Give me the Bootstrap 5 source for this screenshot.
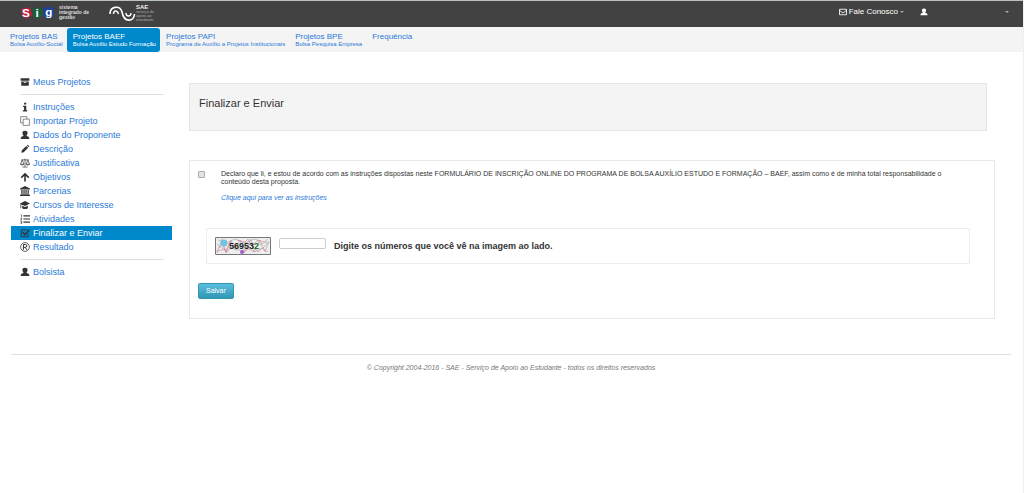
<!DOCTYPE html>
<html lang="pt-BR">
<head>
<meta charset="utf-8">
<meta name="viewport" content="width=device-width, initial-scale=1">
<title>SAE - Finalizar e Enviar</title>
<link rel="stylesheet" href="https://cdn.jsdelivr.net/npm/bootstrap@5.3.0/dist/css/bootstrap.min.css">
<style>
body{font-family:"Liberation Sans",Arial,sans-serif;font-size:8px;line-height:10px;color:#333;background:#fff;border-right:1px solid #f0f0f0;min-height:100vh}
a{color:#2a7ad8;text-decoration:none}
.topbar{background:#424242;border-top:1px solid #b9c2be;height:27px;padding:0 14px 0 21px}
.topbar .btn{--bs-btn-color:#fff;--bs-btn-hover-color:#fff;--bs-btn-active-color:#fff;--bs-btn-font-size:8px;--bs-btn-line-height:10px;--bs-btn-padding-x:0px;--bs-btn-padding-y:0px;--bs-btn-border-width:0px;display:flex;align-items:center}
.topbar .dropdown-toggle::after{border:solid transparent;border-width:2px 2px 0;border-top-color:#aaa;margin-left:2px}
.topbar .btn svg{width:8px;height:8px;margin-right:2px}
.topbar .user-menu{width:89px;justify-content:space-between}
.actions{padding-top:6px}
.brand-copy{font-size:5px;line-height:5px;color:#ddd;font-weight:700}
.brand-copy span{display:block}
.sae{margin-left:20px;color:#fff}
.sae-copy{font-size:4px;line-height:4px;color:#aaa}
.sae-copy b{display:block;font-size:6px;line-height:5px;color:#eee}
.tabs{background:#f4f4f4;height:25px;padding-left:4px}
.tabs .nav-link{padding:4px 4px 0 6px;height:24px;line-height:9px;font-size:8px;color:#2a7ad8;border-radius:3px;margin-top:1px}
.tabs .nav-link.active{background:#0088cc;color:#fff}
.tabs small{display:block;font-size:6px;line-height:6px}
.page{padding:23px 11px 0 11px}
.side{width:161px}
.side .nav-link{display:flex;align-items:center;gap:3px;height:14px;padding:0 0 0 9px;font-size:9px;line-height:14px;color:#2a7ad8}
.side .nav-link.active{background:#0088cc;color:#fff}
.side svg{width:10px;height:10px;color:#333;flex:none}
.side hr,.foot hr{border-color:#e0e0e0;opacity:1}
.side hr{margin:5px 8px 5px 9px}
.main-col{padding:8px 17px 0}
.title-box{background:#f4f4f4;border:1px solid #e6e6e6;height:48px;padding:13px 9px;margin-right:8px}
.title-box h1{font-size:11px;line-height:13px;margin:0;font-weight:400}
.panel{border:1px solid #e8e8e8;margin-top:29px;height:159px;padding:9px 24px 0 8px}
.terms{font-size:7px;line-height:8px;gap:16px;padding-right:16px}
.terms-link{font-size:7px;line-height:8px;margin:8px 0 0 23px;font-style:italic}
.panel .form-check-input{width:7px;height:7px;margin:1px 0 0;border:1px solid #aaa;border-radius:1px;background-color:#e4e4e4;float:none;flex:none}
.captcha{border:1px solid #ececec;height:36px;margin:26px 0 0 8px;padding:0 8px}
.captcha .form-control{width:47px;height:11px;min-height:0;padding:0 2px;margin:9px 8px 0;font-size:8px;border:1px solid #ccc;border-radius:2px;align-self:flex-start}
.captcha label{font-size:9px;font-weight:700}
.btn-save{--bs-btn-color:#fff;--bs-btn-hover-color:#fff;--bs-btn-font-size:7px;--bs-btn-line-height:10px;--bs-btn-padding-x:7px;--bs-btn-padding-y:2px;--bs-btn-border-radius:2px;border:1px solid #2f96b4;background:linear-gradient(#5bc0de,#2f96b4);margin-top:19px}
.foot{padding:35px 12px 0 11px;font-size:7px;color:#777}
.foot hr{margin:0 0 8px}
</style>
</head>
<body>
<header class="topbar d-flex align-items-start">
  <a href="#" class="d-flex align-items-center mt-1 gap-1" aria-label="SIG, sistema integrado de gestão">
    <svg width="34" height="15" viewBox="0 0 35 15" aria-hidden="true"><path fill="#b5203f" d="M0 4l9-2 3 8-7 4-4-3z"/><path fill="#17603b" d="M12 4l7-2 3 3v6l-8 3-2-5z"/><path fill="#1b459c" d="M23 4l5-3 6 3v7l-7 3-4-4z"/><g fill="#fff" font-family="Liberation Sans" font-size="12" font-weight="700"><text x="1" y="12">S</text><text x="15" y="12">i</text><text x="25" y="11">g</text></g></svg>
    <span class="brand-copy"><span>sistema</span><span>integrado de</span><span>gestão</span></span>
  </a>
  <a href="#" class="sae d-flex align-items-center mt-1" aria-label="SAE">
    <svg width="27" height="16" viewBox="0 0 27 16" fill="none" stroke="#fff" aria-hidden="true"><path stroke-width="1.600" d="M1 8C1 0 11-1 13 6c2 11 12 10 12.500 2"/><path stroke-width="1.400" d="M4.500 8c0-4 4-4 5 0M17 7c0 4 5 4 5 0"/></svg>
    <span class="sae-copy"><b>SAE</b>serviço de<br>apoio ao<br>estudante</span>
  </a>
  <div class="actions d-flex ms-auto">
    <button type="button" class="btn dropdown-toggle me-3"><svg viewBox="0 0 16 16" fill="none" stroke="currentColor" stroke-width="1.700" aria-hidden="true"><path d="M1 2.500h14v11H1zM1 5l7 5 7-5"/></svg>Fale Conosco</button>
    <button type="button" class="btn dropdown-toggle user-menu" aria-label="Usuário"><svg viewBox="0 0 16 16" aria-hidden="true"><use href="#i-user"/></svg></button>
  </div>
</header>
<nav class="tabs nav" aria-label="Projetos">
  <a class="nav-link" href="#">Projetos BAS<small>Bolsa Auxílio-Social</small></a>
  <a class="nav-link active" href="#" aria-current="page">Projetos BAEF<small>Bolsa Auxílio Estudo Formação</small></a>
  <a class="nav-link" href="#">Projetos PAPI<small>Programa de Auxílio a Projetos Institucionais</small></a>
  <a class="nav-link" href="#">Projetos BPE<small>Bolsa Pesquisa Empresa</small></a>
  <a class="nav-link" href="#">Frequência</a>
</nav>
<svg class="d-none" aria-hidden="true">
  <symbol id="i-user" viewBox="0 0 16 16"><path fill="currentColor" d="M8 1c3.500 0 4.500 2 4 4.500S10.500 9 10 9.500c3 .7 5 1 5 5H1c0-4 2-4.300 5-5-.5-.5-1.500-1.500-2-4S4.500 1 8 1z"/></symbol>
</svg>
<div class="page d-flex">
  <nav class="side nav flex-column flex-nowrap flex-shrink-0" aria-label="Menu do projeto">
    <a class="nav-link" href="#"><svg viewBox="0 0 16 16"><path fill="currentColor" d="M1 2h14v4H1zM2 7h12v7H2z"/><path stroke="#fff" stroke-width="1.300" d="M6 8.700h4"/></svg>Meus Projetos</a>
    <hr>
    <a class="nav-link" href="#"><svg viewBox="0 0 16 16"><path fill="currentColor" d="M6.500 1h3.500v3H6.500zM5 6h5v7h1.500v2h-7v-2H6.500V8H5z"/></svg>Instruções</a>
    <a class="nav-link" href="#"><svg viewBox="0 0 16 16" fill="none" stroke="#666" stroke-width="1.200"><path d="M5 5h10v10H5zM5 11H1V1h10v4"/></svg>Importar Projeto</a>
    <a class="nav-link" href="#"><svg><use href="#i-user"/></svg>Dados do Proponente</a>
    <a class="nav-link" href="#"><svg viewBox="0 0 16 16"><path fill="currentColor" d="M2 14l1-4 7-7 3 3-7 7zM11 2l1-1q1 0 3 3l-1 1z"/></svg>Descrição</a>
    <a class="nav-link" href="#"><svg viewBox="0 0 16 16" fill="none" stroke="currentColor" stroke-width="1.100"><path d="M8 1v13M4 14.500h8M2 3h12M3.500 3L.7 10h5.600zM12.500 3L9.700 10h5.600zM.7 10q2.800 3 5.600 0M9.700 10q2.800 3 5.600 0"/></svg>Justificativa</a>
    <a class="nav-link" href="#"><svg viewBox="0 0 16 16" fill="none" stroke="currentColor" stroke-width="2.600"><path d="M8 15V3M2 9l6-6 6 6"/></svg>Objetivos</a>
    <a class="nav-link" href="#"><svg viewBox="0 0 16 16"><path fill="currentColor" d="M8 0l8 4v1.500H0V4zM2 6.500h2.200V12H2zM5.500 6.500h2V12h-2zM8.700 6.500h2V12h-2zM12 6.500h2V12h-2zM1 12.500h14V14H1zM0 14.500h16V16H0z"/></svg>Parcerias</a>
    <a class="nav-link" href="#"><svg viewBox="0 0 16 16"><path fill="currentColor" d="M8 1.500l8 4L8 9.500 2 7v6H.8V6.500L0 5.500zM3.500 9L8 11l4.500-2v4Q8 16 3.500 13z"/></svg>Cursos de Interesse</a>
    <a class="nav-link" href="#"><svg viewBox="0 0 16 16" fill="none" stroke="currentColor"><path stroke-width="1.800" d="M5.500 3H16M5.500 8H16M5.500 13H16"/><path d="M1 1.500h1.500V5M.8 6.500h2v1.500l-2 1.500h2.400M.8 11.500h2v4h-2m0-2h2"/></svg>Atividades</a>
    <a class="nav-link active" href="#" aria-current="page"><svg viewBox="0 0 16 16" fill="none" stroke="currentColor"><path stroke-width="1.500" d="M13 9v5H2V3h9"/><path stroke-width="2.400" d="M4.500 7l3.500 3.500L15 3"/></svg>Finalizar e Enviar</a>
    <a class="nav-link" href="#"><svg viewBox="0 0 16 16" fill="none" stroke="currentColor" stroke-width="1.200"><circle cx="8" cy="8" r="7"/><path stroke-width="1.600" d="M5.500 12.500V4H8.500q2.500 0 2.500 2.200T8.500 8.500h-3m3 0l2.500 4"/></svg>Resultado</a>
    <hr>
    <a class="nav-link" href="#"><svg><use href="#i-user"/></svg>Bolsista</a>
  </nav>
  <main class="main-col flex-grow-1">
    <div class="title-box"><h1>Finalizar e Enviar</h1></div>
    <form class="panel">
      <div class="terms d-flex align-items-start">
        <input class="form-check-input" type="checkbox" id="aceite">
        <label for="aceite">Declaro que li, e estou de acordo com as instruções dispostas neste FORMULÁRIO DE INSCRIÇÃO ONLINE DO PROGRAMA DE BOLSA AUXÍLIO ESTUDO E FORMAÇÃO – BAEF, assim como é de minha total responsabilidade o conteúdo desta proposta.</label>
      </div>
      <div class="terms-link"><a href="#">Clique aqui para ver as instruções</a></div>
      <div class="captcha d-flex align-items-center">
        <svg width="56" height="18" viewBox="0 0 56 18" role="img" aria-label="Números de verificação">
          <path fill="#eee" stroke="#777" d="M.5.500h55v17H.5z"/>
          <g fill="none" stroke-width=".7"><path stroke="#aaa" d="M2 16L7 2l4 14 5-13 4 10 5-10 4 13 7-14 3 13 6-12 5 12 4-11M2 7l10 8 6-6 9 6 8-8 8 8 10-9M3 3l8 3 9-4 10 4 9-4 14 4"/><path stroke="#e08a98" d="M3 12l4-5 4 8 4-11 7 10M22 3l8 2 3-3 4 7 6-6 3 5 7-6M28 15l6-3 5 3 8-4 6 4M1 14l12-2"/></g>
          <circle cx="9" cy="6" r="3.500" fill="#72c3e2"/><circle cx="27" cy="15" r="2" fill="#a05bd0"/>
          <text x="14" y="12" font-family="Liberation Sans" font-size="9" font-weight="700" fill="#222">56953<tspan fill="#16752b">2</tspan></text>
        </svg>
        <input class="form-control" type="text" id="codigo">
        <label for="codigo">Digite os números que você vê na imagem ao lado.</label>
      </div>
      <button type="submit" class="btn btn-save">Salvar</button>
    </form>
  </main>
</div>
<footer class="foot"><hr><p class="text-center fst-italic mb-0">© Copyright 2004-2016 - SAE - Serviço de Apoio ao Estudante - todos os direitos reservados</p></footer>
<script src="https://cdn.jsdelivr.net/npm/bootstrap@5.3.0/dist/js/bootstrap.bundle.min.js"></script>
</body>
</html>
